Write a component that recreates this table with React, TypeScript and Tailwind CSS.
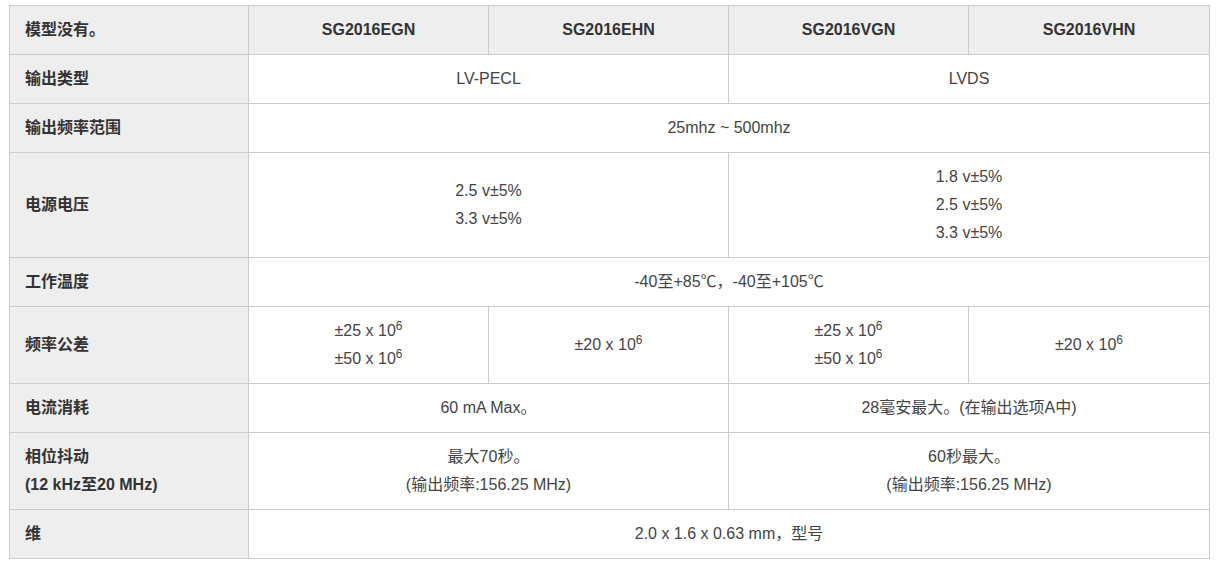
const font = {
  fontFamily: '"Liberation Sans", Arial, "Noto Sans CJK SC", sans-serif',
};

const th = "border border-[#cccccc] bg-[#eeeeee] px-4 py-[10px] font-bold text-[#333333]";
const label = "border border-[#cccccc] bg-[#eeeeee] pl-[15px] pr-4 py-[10px] text-left font-bold text-[#333333]";
const td = "border border-[#cccccc] bg-white px-4 py-[10px] text-center text-[#444444]";

const Pow = ({ n }: { n: string }) => (
  <>
    ±{n} x 10<sup className="text-[12px]">6</sup>
  </>
);

const App = () => {
  return (
    <div className="bg-white pl-[9px] pt-[5px]" style={font}>
      <table className="w-[1200px] table-fixed border-collapse text-[16px] leading-[28px]">
        <colgroup>
          <col className="w-[239px]" />
          <col className="w-[240px]" />
          <col className="w-[240px]" />
          <col className="w-[240px]" />
          <col className="w-[241px]" />
        </colgroup>
        <thead>
          <tr>
            <th className={label}>模型没有。</th>
            <th className={th}>SG2016EGN</th>
            <th className={th}>SG2016EHN</th>
            <th className={th}>SG2016VGN</th>
            <th className={th}>SG2016VHN</th>
          </tr>
        </thead>
        <tbody>
          <tr>
            <th className={label}>输出类型</th>
            <td className={td} colSpan={2}>LV-PECL</td>
            <td className={td} colSpan={2}>LVDS</td>
          </tr>
          <tr>
            <th className={label}>输出频率范围</th>
            <td className={td} colSpan={4}>25mhz ~ 500mhz</td>
          </tr>
          <tr>
            <th className={label}>电源电压</th>
            <td className={td} colSpan={2}>
              2.5 v±5%
              <br />
              3.3 v±5%
            </td>
            <td className={td} colSpan={2}>
              1.8 v±5%
              <br />
              2.5 v±5%
              <br />
              3.3 v±5%
            </td>
          </tr>
          <tr>
            <th className={label}>工作温度</th>
            <td className={td} colSpan={4}>-40至+85℃，-40至+105℃</td>
          </tr>
          <tr>
            <th className={label}>频率公差</th>
            <td className={td}>
              <Pow n="25" />
              <br />
              <Pow n="50" />
            </td>
            <td className={td}>
              <Pow n="20" />
            </td>
            <td className={td}>
              <Pow n="25" />
              <br />
              <Pow n="50" />
            </td>
            <td className={td}>
              <Pow n="20" />
            </td>
          </tr>
          <tr>
            <th className={label}>电流消耗</th>
            <td className={td} colSpan={2}>60 mA Max。</td>
            <td className={td} colSpan={2}>28毫安最大。(在输出选项A中)</td>
          </tr>
          <tr>
            <th className={label}>
              相位抖动
              <br />
              (12 kHz至20 MHz)
            </th>
            <td className={td} colSpan={2}>
              最大70秒。
              <br />
              (输出频率:156.25 MHz)
            </td>
            <td className={td} colSpan={2}>
              60秒最大。
              <br />
              (输出频率:156.25 MHz)
            </td>
          </tr>
          <tr>
            <th className={label}>维</th>
            <td className={td} colSpan={4}>2.0 x 1.6 x 0.63 mm，型号</td>
          </tr>
        </tbody>
      </table>
    </div>
  );
};

export default App;
